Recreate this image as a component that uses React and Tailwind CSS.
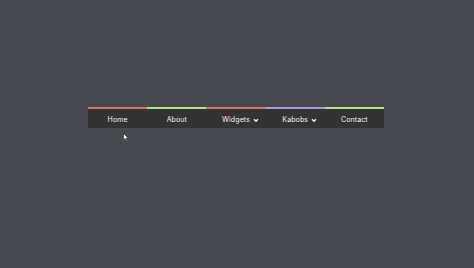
import React from "react";

const items = [
  { label: "Home", color: "bg-[#dc7468]" },
  { label: "About", color: "bg-[#b8df8a]" },
  { label: "Widgets", color: "bg-[#dc7468]", caret: true },
  { label: "Kabobs", color: "bg-[#a99ae0]", caret: true },
  { label: "Contact", color: "bg-[#b8df8a]" },
];

function Caret() {
  return (
    <svg
      width="6"
      height="5"
      viewBox="0 0 6 5"
      className="absolute left-full top-[3px] ml-[3px]"
    >
      <path d="M1 1.2 L3 3.3 L5 1.2" fill="none" stroke="#f2f2f2" strokeWidth="1.3" />
    </svg>
  );
}

export default function App() {
  return (
    <div
      className="relative w-[474px] h-[268px] bg-[#464a50] pt-[107px] pl-[88px]"
      style={{ fontFamily: "Inter, 'Open Sans', sans-serif" }}
    >
      <nav className="flex w-[296px]">
        {items.map((it) => (
          <div key={it.label} className="flex-1 flex flex-col">
            <div className={`h-[2px] ${it.color}`} />
            <div className="h-[19px] pt-[2px] bg-[#333334] flex items-center justify-center text-[7px] leading-[10px] text-[#f0f0f0] tracking-[0.1px]">
              <span className="relative">
                {it.label}
                {it.caret && <Caret />}
              </span>
            </div>
          </div>
        ))}
      </nav>
      <svg
        className="absolute left-[123px] top-[133px]"
        width="6"
        height="9"
        viewBox="0 0 6 9"
      >
        <path d="M0.5 0.5 L0.5 7 L2 5.6 L3.2 8.3 L4.2 7.9 L3 5.3 L5.2 5.3 Z" fill="#ffffff" stroke="#222" strokeWidth="0.6" />
      </svg>
    </div>
  );
}
